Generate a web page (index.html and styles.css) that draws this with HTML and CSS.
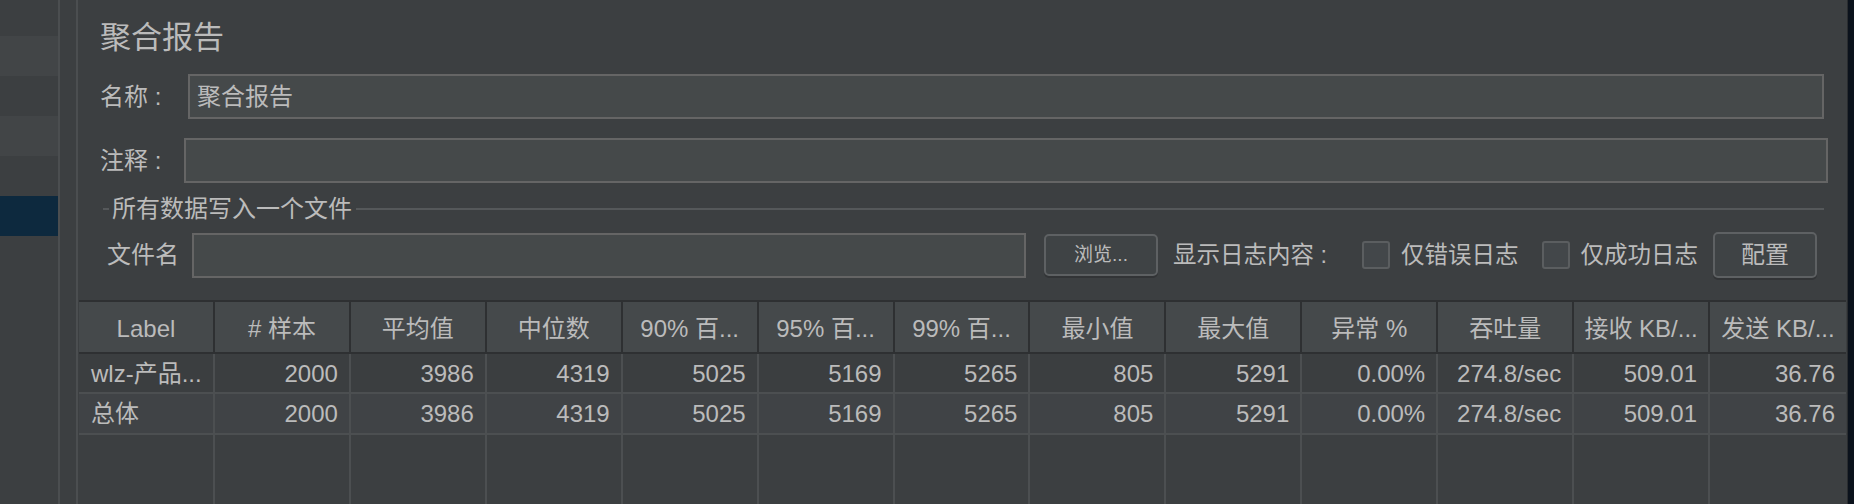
FILE: index.html
```html
<!DOCTYPE html>
<html lang="zh-CN">
<head>
<meta charset="utf-8">
<title>聚合报告</title>
<link rel="stylesheet" href="styles.css">
</head>
<body>
<div class="window">
  <aside class="tree">
    <div class="tree-row first"></div>
    <div class="tree-row alt"></div>
    <div class="tree-row"></div>
    <div class="tree-row alt"></div>
    <div class="tree-row"></div>
    <div class="tree-row selected"></div>
  </aside>
  <div class="splitter"></div>
  <main class="panel">
    <h1 class="title">聚合报告</h1>
    <div class="field-row name-row">
      <span class="field-label">名称 :</span>
      <div class="text-input">聚合报告</div>
    </div>
    <div class="field-row comment-row">
      <span class="field-label">注释 :</span>
      <div class="text-input"></div>
    </div>
    <div class="group-title">
      <span class="group-line short"></span>
      <span class="group-text">所有数据写入一个文件</span>
      <span class="group-line long"></span>
    </div>
    <div class="file-row">
      <span class="file-label">文件名</span>
      <div class="text-input file-input"></div>
      <button class="btn browse">浏览...</button>
      <span class="log-label">显示日志内容 :</span>
      <span class="checkbox cb-error"></span>
      <span class="cb-text">仅错误日志</span>
      <span class="checkbox cb-success"></span>
      <span class="cb-text">仅成功日志</span>
      <button class="btn config">配置</button>
    </div>
    <div class="table">
      <div class="thead">
        <div class="th">Label</div>
        <div class="th"># 样本</div>
        <div class="th">平均值</div>
        <div class="th">中位数</div>
        <div class="th">90% 百...</div>
        <div class="th">95% 百...</div>
        <div class="th">99% 百...</div>
        <div class="th">最小值</div>
        <div class="th">最大值</div>
        <div class="th">异常 %</div>
        <div class="th">吞吐量</div>
        <div class="th">接收 KB/...</div>
        <div class="th">发送 KB/...</div>
      </div>
      <div class="trow r1">
        <div class="td text">wlz-产品...</div>
        <div class="td">2000</div>
        <div class="td">3986</div>
        <div class="td">4319</div>
        <div class="td">5025</div>
        <div class="td">5169</div>
        <div class="td">5265</div>
        <div class="td">805</div>
        <div class="td">5291</div>
        <div class="td">0.00%</div>
        <div class="td">274.8/sec</div>
        <div class="td">509.01</div>
        <div class="td">36.76</div>
      </div>
      <div class="trow r2">
        <div class="td text">总体</div>
        <div class="td">2000</div>
        <div class="td">3986</div>
        <div class="td">4319</div>
        <div class="td">5025</div>
        <div class="td">5169</div>
        <div class="td">5265</div>
        <div class="td">805</div>
        <div class="td">5291</div>
        <div class="td">0.00%</div>
        <div class="td">274.8/sec</div>
        <div class="td">509.01</div>
        <div class="td">36.76</div>
      </div>
      <div class="trow filler">
        <div class="td"></div><div class="td"></div><div class="td"></div><div class="td"></div>
        <div class="td"></div><div class="td"></div><div class="td"></div><div class="td"></div>
        <div class="td"></div><div class="td"></div><div class="td"></div><div class="td"></div>
        <div class="td"></div>
      </div>
    </div>
  </main>
  <div class="edge"></div>
</div>
</body>
</html>
```
FILE: styles.css
```css
* { box-sizing: border-box; }
html, body {
  margin: 0;
  padding: 0;
  height: 100%;
  overflow: hidden;
  background: #0b121c;
}
body {
  font-family: "Liberation Sans", "Noto Sans CJK SC", sans-serif;
  color: #bbbbbb;
  font-size: 24px;
}
.window {
  display: flex;
  height: 504px;
  width: 1854px;
}
.tree {
  width: 58px;
  flex: none;
  background: #3c3f41;
  display: flex;
  flex-direction: column;
}
.tree-row { height: 40px; flex: none; }
.tree-row.first { height: 36px; }
.tree-row.alt { background: #424547; }
.tree-row.selected { background: #0d293e; }
.splitter {
  width: 20px;
  flex: none;
  background: #3c3f41;
  border-left: 2px solid #4b4e50;
  border-right: 2px solid #4b4e50;
}
.panel {
  width: 1769px;
  flex: none;
  background: #3c3f41;
  display: flex;
  flex-direction: column;
}
.edge {
  flex: 1;
  background: #0b121c;
  border-left: 1px solid #2a2d30;
}
.title {
  margin: 22px 0 0 22px;
  font-size: 31px;
  line-height: 31px;
  font-weight: normal;
  color: #bbbbbb;
}
.field-row {
  display: flex;
  align-items: center;
  height: 45px;
}
.name-row { margin: 21px 23px 0 22px; }
.comment-row { margin: 19px 19px 0 22px; }
.field-label {
  flex: none;
  font-size: 24px;
  line-height: 24px;
  white-space: pre;
}
.name-row .field-label { width: 88px; }
.comment-row .field-label { width: 84px; }
.text-input {
  flex: 1;
  height: 45px;
  background: #45494a;
  border: 2px solid #656565;
  padding-left: 7px;
  font-size: 24px;
  line-height: 41px;
  color: #bbbbbb;
}
.group-title {
  display: flex;
  align-items: center;
  height: 24px;
  margin: 14px 23px 0 25px;
}
.group-line {
  height: 2px;
  background: #55585a;
}
.group-line.short { width: 6px; flex: none; }
.group-line.long { flex: 1; }
.group-text {
  padding: 0 4px 0 3px;
  font-size: 24px;
  line-height: 24px;
}
.file-row {
  display: flex;
  align-items: center;
  height: 46px;
  margin: 11px 0 0 29px;
}
.file-label {
  width: 85px;
  flex: none;
  font-size: 24px;
  line-height: 24px;
}
.file-input {
  flex: none;
  width: 834px;
}
.btn {
  flex: none;
  font-family: "Liberation Sans", "Noto Sans CJK SC", sans-serif;
  color: #bbbbbb;
  background: #3f4345;
  border: 2px solid #5e6163;
  border-radius: 5px;
  box-shadow: 0 2px 0 #323436;
  padding: 0;
  text-align: center;
}
.browse {
  margin-left: 18px;
  width: 114px;
  height: 42px;
  font-size: 19px;
  line-height: 38px;
}
.config {
  margin-left: 15px;
  width: 104px;
  height: 46px;
  font-size: 24px;
  line-height: 42px;
}
.log-label {
  margin-left: 15px;
  font-size: 23.5px;
  line-height: 24px;
  white-space: pre;
}
.checkbox {
  flex: none;
  width: 28px;
  height: 28px;
  border: 2px solid #5b5e60;
  border-radius: 3px;
  background: #43474a;
}
.cb-error { margin-left: 35px; }
.cb-success { margin-left: 23px; }
.cb-text {
  margin-left: 11px;
  font-size: 23.5px;
  line-height: 24px;
}
.table {
  margin: 22px 1px 0 1px;
  flex: 1;
  display: flex;
  flex-direction: column;
  border-top: 2px solid #2e3032;
}
.thead, .trow {
  display: grid;
  grid-template-columns: repeat(13, 1fr);
}
.thead {
  height: 52px;
  background: #45494b;
  border-bottom: 2px solid #2e3032;
}
.th {
  border-right: 2px solid #2e3032;
  text-align: center;
  font-size: 24px;
  padding-top: 3px;
  line-height: 47px;
  white-space: nowrap;
  overflow: hidden;
}
.th:last-child { border-right: none; }
.trow.r1 { height: 40px; background: #3b3e40; border-bottom: 2px solid #4c4f51; }
.trow.r2 { height: 41px; background: #404346; border-bottom: 2px solid #4c4f51; }
.trow.filler { flex: 1; background: #3c3f41; }
.td {
  border-right: 2px solid #4c4f51;
  text-align: right;
  padding-right: 11px;
  padding-top: 1px;
  font-size: 24px;
  line-height: 37px;
  white-space: nowrap;
  overflow: hidden;
}
.td:last-child { border-right: none; }
.td.text {
  text-align: left;
  padding-left: 12px;
  padding-right: 0;
}
```
